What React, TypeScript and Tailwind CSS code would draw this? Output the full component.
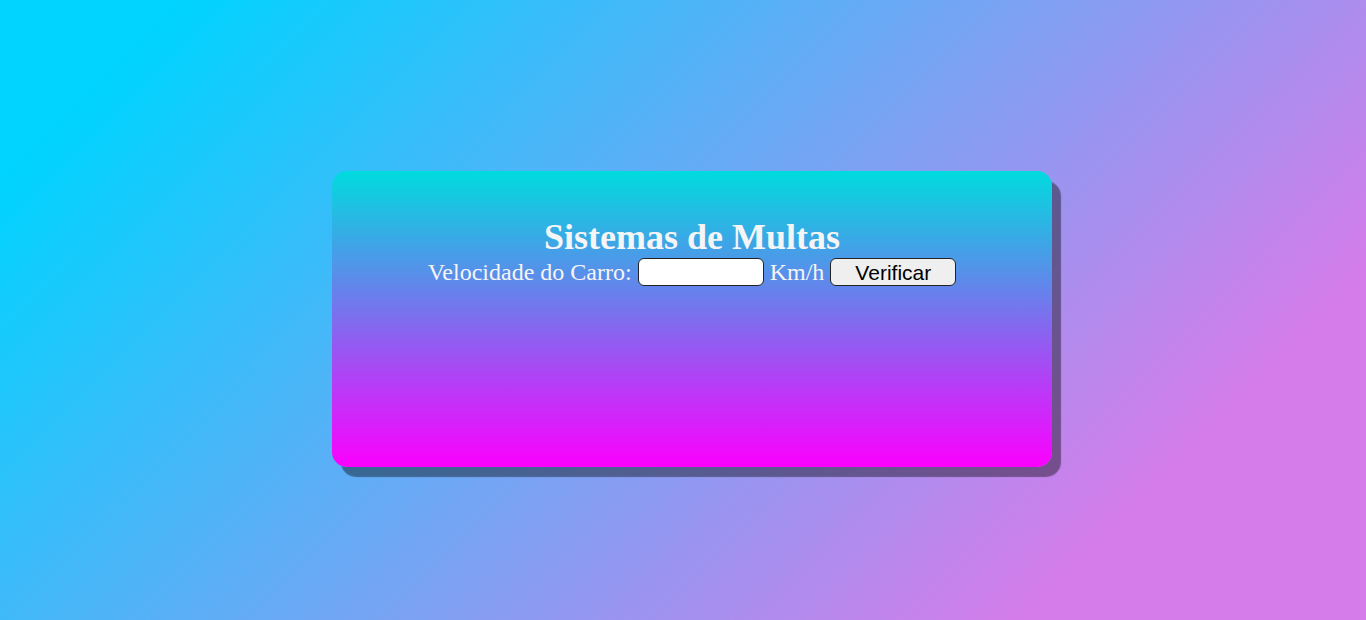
export default function App() {
  return (
    <div className="min-h-[620px] w-full bg-[linear-gradient(135deg,#00d4ff_9%,#d67cea_83%)] flex items-center justify-center pl-[18px] pt-[18px] font-['Liberation_Serif',serif]">
      <div className="w-[720px] h-[296px] rounded-[15px] bg-[linear-gradient(to_bottom,#00dbde,#fc00ff)] shadow-[9px_10px_1px_rgba(0,0,0,0.4)] pt-[48px] text-center text-[#f5f5f5]">
        <h1 className="text-[36px] font-bold leading-[37px]">Sistemas de Multas</h1>
        <div className="text-[24px] leading-[32px] flex items-center justify-center gap-[6px]">
          <span>Velocidade do Carro:</span>
          <input
            type="text"
            className="w-[126px] h-[28px] bg-white border border-[#222] rounded-[6px] text-black px-1 text-[16px]"
          />
          <span>Km/h</span>
          <button className="w-[126px] h-[28px] bg-[#efefef] border border-[#222] rounded-[6px] text-black text-[21px] leading-none font-['Liberation_Sans',sans-serif]">
            Verificar
          </button>
        </div>
      </div>
    </div>
  );
}
